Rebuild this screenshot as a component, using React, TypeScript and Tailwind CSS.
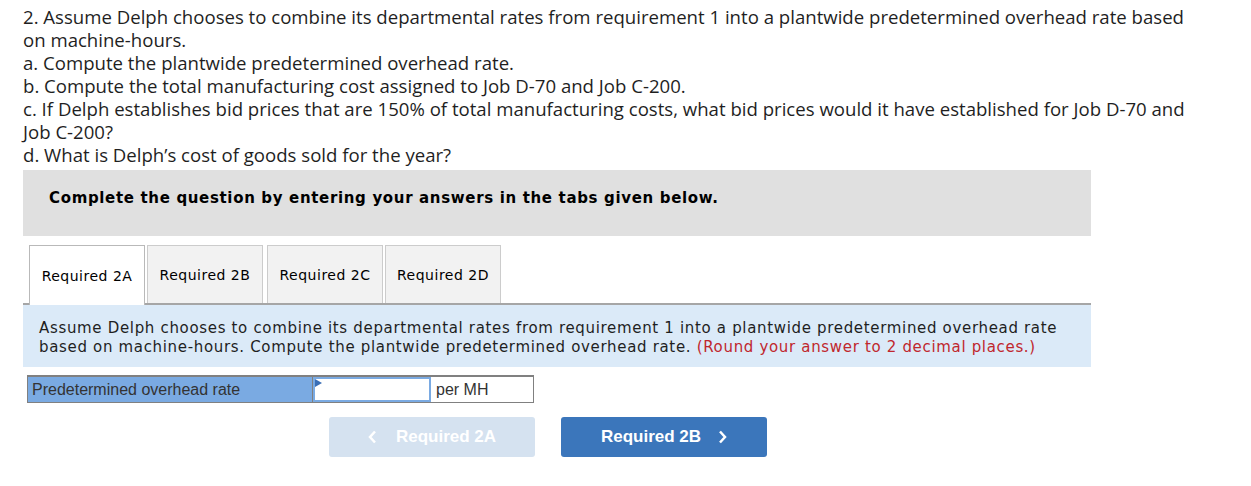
import React from "react";

export default function App() {
  return (
    <div className="bg-white w-[1251px] h-[486px] overflow-hidden pl-[23px] pt-[5px]">
      <div className="w-[1185px] text-[18.6px] leading-[23px] text-[#1f1f1f]" style={{ fontFamily: '"Open Sans", sans-serif' }}>
        <p>2. Assume Delph chooses to combine its departmental rates from requirement 1 into a plantwide predetermined overhead rate based on machine-hours.</p>
        <p>a. Compute the plantwide predetermined overhead rate.</p>
        <p>b. Compute the total manufacturing cost assigned to Job D-70 and Job C-200.</p>
        <p>c. If Delph establishes bid prices that are 150% of total manufacturing costs, what bid prices would it have established for Job D-70 and Job C-200?</p>
        <p>d. What is Delph’s cost of goods sold for the year?</p>
      </div>
      <div className="w-[1068px]" style={{ fontFamily: '"DejaVu Sans", Verdana, sans-serif' }}>
        <div className="mt-[4px] h-[66px] bg-[#e0e0e0] flex items-center pl-[26px] pb-[10px]">
          <span className="font-bold text-[15px] tracking-[0.66px] text-black">Complete the question by entering your answers in the tabs given below.</span>
        </div>
        <div className="mt-[9px] flex border-b-[2px] border-[#a6a6a6] pl-[6px] gap-[2px] h-[60px] items-end">
          <div className="w-[116px] h-[60px] -mb-[2px] bg-white border border-[#b9b9b9] border-b-0 flex items-center justify-center pt-[2px] text-[14px] tracking-[0.5px] text-black">Required 2A</div>
          <div className="w-[116px] h-[58px] bg-[#f2f2f2] border border-[#cccccc] border-b-0 flex items-center justify-center pt-[2px] text-[14px] tracking-[0.5px] text-black">Required 2B</div>
          <div className="w-[116px] h-[58px] bg-[#f2f2f2] border border-[#cccccc] border-b-0 flex items-center justify-center pt-[2px] text-[14px] tracking-[0.5px] text-black ml-[2px]">Required 2C</div>
          <div className="w-[116px] h-[58px] bg-[#f2f2f2] border border-[#cccccc] border-b-0 flex items-center justify-center pt-[2px] text-[14px] tracking-[0.5px] text-black">Required 2D</div>
        </div>
        <div className="h-[62px] bg-[#dbeaf8] pl-[16px] pt-[14px] text-[15px] tracking-[0.67px] leading-[19px] text-[#1f1f1f]">
          Assume Delph chooses to combine its departmental rates from requirement 1 into a plantwide predetermined overhead rate<br />
          based on machine-hours. Compute the plantwide predetermined overhead rate. <span className="text-[#c0272d]">(Round your answer to 2 decimal places.)</span>
        </div>
      </div>
      <div className="mt-[8px] ml-[4px] flex w-[507px] h-[28px] border border-[#808080] border-t-[2px] text-[16px] text-[#333]" style={{ fontFamily: '"Liberation Sans", Arial, sans-serif' }}>
        <div className="w-[285px] bg-[#7aaae2] flex items-center pl-[4px] border-r border-[#808080]">Predetermined overhead rate</div>
        <div className="relative w-[118px] border-[2px] border-[#7aaae2] bg-white">
          <svg className="absolute left-0 top-0" width="7" height="8" viewBox="0 0 7 8"><polygon points="0,0 7,4 0,8" fill="#3b6fb6" /></svg>
        </div>
        <div className="flex-1 flex items-center pl-[5px] bg-white">per MH</div>
      </div>
      <div className="mt-[14px] ml-[306px] flex gap-[26px]" style={{ fontFamily: '"Liberation Sans", Arial, sans-serif' }}>
        <div className="w-[206px] h-[40px] rounded-[3px] bg-[#d5e2f0] flex items-center justify-center gap-[19px] text-white font-bold text-[17px]">
          <svg width="9" height="14" viewBox="0 0 9 14"><polyline points="7,1.5 2,7 7,12.5" fill="none" stroke="white" strokeWidth="2.5" /></svg>
          <span>Required 2A</span>
        </div>
        <div className="w-[206px] h-[40px] rounded-[3px] bg-[#3b76bb] flex items-center justify-center gap-[17px] text-white font-bold text-[17px]">
          <span>Required 2B</span>
          <svg width="9" height="14" viewBox="0 0 9 14"><polyline points="2,1.5 7,7 2,12.5" fill="none" stroke="white" strokeWidth="2.5" /></svg>
        </div>
      </div>
    </div>
  );
}
